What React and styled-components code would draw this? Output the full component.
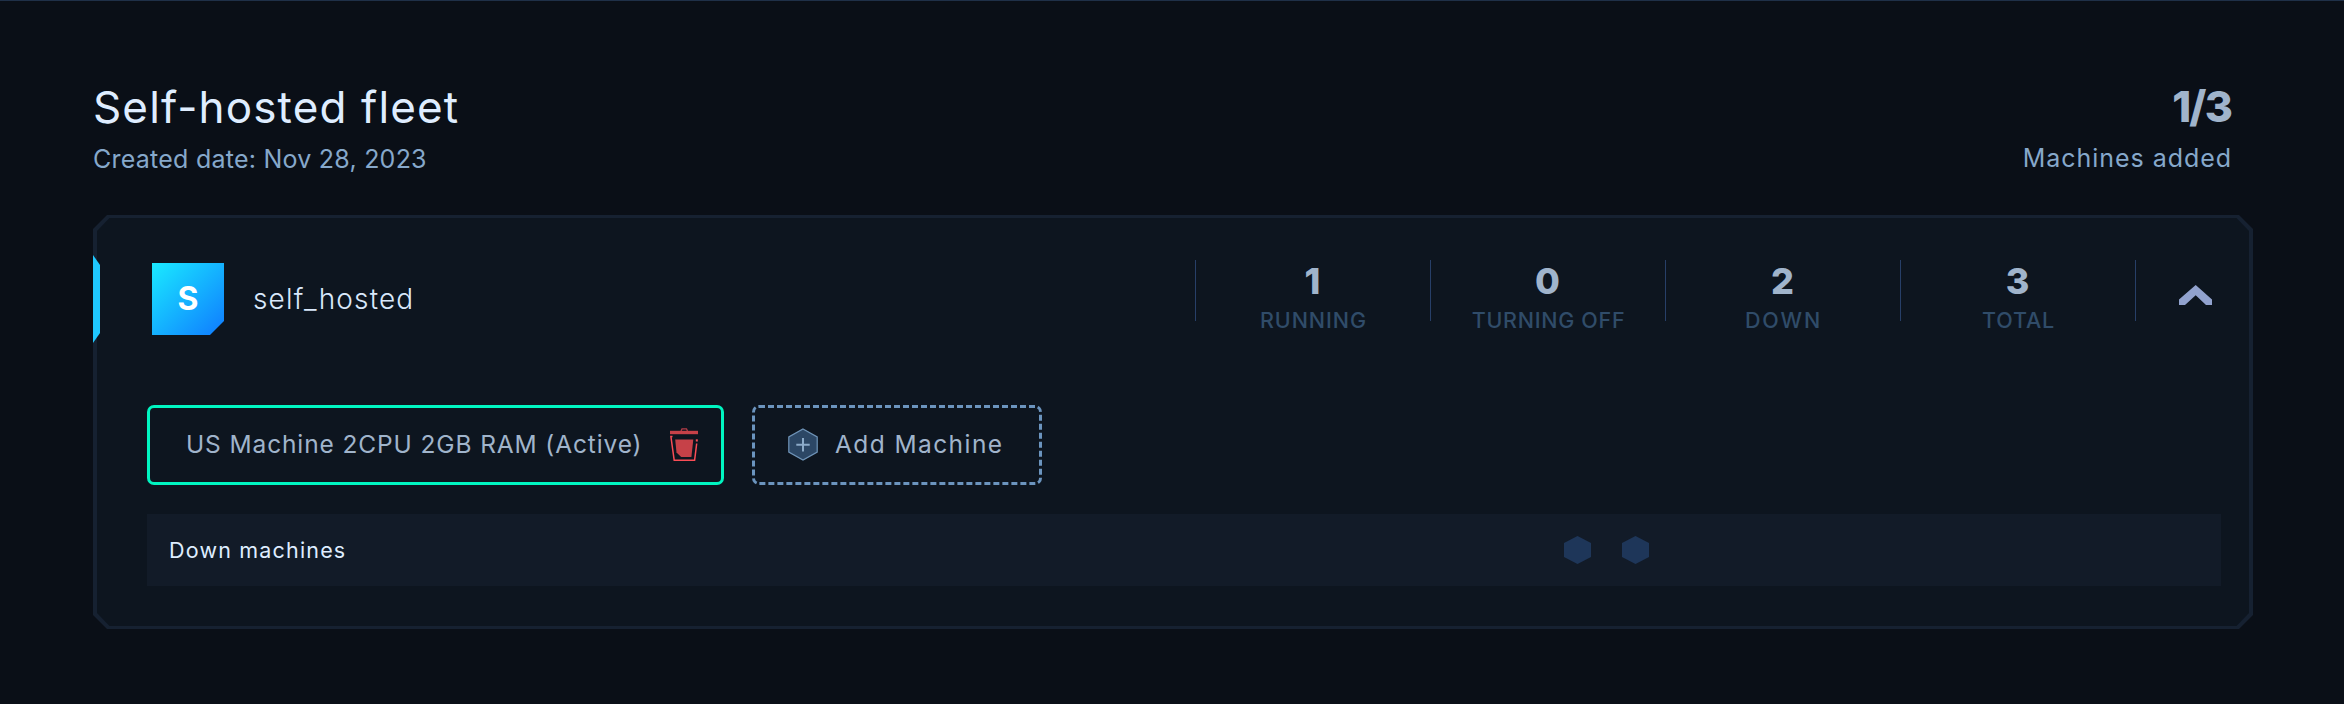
import React from "react";
import styled, { createGlobalStyle } from "styled-components";

const GlobalStyle = createGlobalStyle`
  * { box-sizing: border-box; }
  body {
    margin: 0;
    background: #0a0f17;
    font-family: Inter, "Liberation Sans", sans-serif;
  }
`;

const Page = styled.main`
  height: 704px;
  padding: 84px 91px 0 93px;
  border-top: 1px solid #1f3048;
`;

const FleetHeader = styled.header`
  display: flex;
  justify-content: space-between;
  height: 130px;
  padding-right: 22px;
  white-space: nowrap;
`;

const Title = styled.h1`
  margin: 0;
  font-size: 44px;
  font-weight: 400;
  line-height: 44px;
  letter-spacing: 1.14px;
  color: #dfedff;
`;

const Subtitle = styled.p`
  margin: 15px 0 0;
  font-size: 25px;
  line-height: 30px;
  letter-spacing: 0.24px;
  color: #86a8cb;
`;

const MachineCount = styled.div`
  text-align: right;
`;

const CountValue = styled.div`
  font-size: 43px;
  font-weight: 800;
  line-height: 43px;
  letter-spacing: -1.9px;
  color: #a0b4cb;
`;

const CountLabel = styled(Subtitle)`
  letter-spacing: 0.96px;
  margin-right: -1px;
`;

const Card = styled.section`
  position: relative;
  height: 414px;
  padding: 3px 4px;
  background: #162131;
  clip-path: polygon(
    14px 0, calc(100% - 14px) 0, 100% 14px, 100% calc(100% - 14px),
    calc(100% - 14px) 100%, 14px 100%, 0 calc(100% - 14px), 0 14px
  );
`;

const CardBody = styled.div`
  height: 100%;
  padding: 42px 28px 0 50px;
  background: #0d151f;
  clip-path: polygon(
    12.5px 0, calc(100% - 12.5px) 0, 100% 13px, 100% calc(100% - 13px),
    calc(100% - 12.5px) 100%, 12.5px 100%, 0 calc(100% - 13px), 0 13px
  );
`;

const Accent = styled.span`
  position: absolute;
  left: 0;
  top: 40px;
  width: 7px;
  height: 88px;
  background: #1fc8ff;
  clip-path: polygon(0 0, 100% 10px, 100% calc(100% - 10px), 0 100%);
`;

const GroupHeader = styled.div`
  display: flex;
  align-items: flex-start;
  height: 145px;
`;

const Badge = styled.div`
  width: 72px;
  height: 72px;
  margin: 3px 29px 0 5px;
  background: linear-gradient(135deg, #1aeaff 0%, #0f7bff 100%);
  clip-path: polygon(0 0, 100% 0, 100% 58px, 58px 100%, 0 100%);
  color: #fff;
  font-size: 32px;
  font-weight: 700;
  line-height: 71px;
  text-align: center;
`;

const GroupName = styled.h2`
  flex: 1;
  margin: 4px 0 0;
  font-size: 28px;
  font-weight: 300;
  line-height: 71px;
  letter-spacing: 1.15px;
  color: #d9e8fb;
`;

const Stat = styled.div`
  width: 235px;
  height: 76px;
  padding-top: 3px;
  text-align: center;
  background: linear-gradient(#273f68, #273f68) left top / 1px 61px no-repeat;
`;

const StatValue = styled.div`
  font-size: 36px;
  font-weight: 800;
  line-height: 36px;
  color: #a0b4cb;
`;

const StatLabel = styled.div`
  margin-top: 6px;
  padding-left: 2px;
  font-size: 21.5px;
  font-weight: 500;
  line-height: 30px;
  letter-spacing: ${(p) => p.$tracking}px;
  white-space: nowrap;
  color: #304c69;
`;

const Toggle = styled.button`
  display: flex;
  align-items: flex-start;
  width: 86px;
  height: 61px;
  padding: 25px 0 0 44px;
  border: 0;
  background: linear-gradient(#273f68, #273f68) left top / 1px 61px no-repeat;
`;

const MachineList = styled.div`
  display: flex;
  gap: 28px;
  margin-bottom: 29px;
`;

const MachineButton = styled.div`
  display: flex;
  align-items: center;
  width: ${(p) => p.$width}px;
  height: 80px;
  padding: 0 22px 0 ${(p) => (p.$dashed ? 33 : 36)}px;
  border: 3px ${(p) => (p.$dashed ? "dashed #6b94be" : "solid #00f5c1")};
  border-radius: 7px;
  font-size: 24.5px;
  line-height: 30px;
  letter-spacing: ${(p) => (p.$dashed ? 1.42 : 0.88)}px;
  white-space: nowrap;
  color: #a0b4cb;

  svg { flex: none; }
`;

const MachineName = styled.span`
  flex: 1;
  padding-bottom: 2px;
`;

const PlusIcon = styled.svg`
  margin: 0 17px 1px 0;
`;

const DownRow = styled.div`
  display: flex;
  align-items: center;
  height: 72px;
  padding-left: 22px;
  background: #121b28;
`;

const DownLabel = styled.span`
  width: 1395px;
  font-size: 21.5px;
  letter-spacing: 1.18px;
  color: #dfedff;
`;

const DownSlots = styled.div`
  display: flex;
  gap: 31px;
`;

const Hexagon = styled.span`
  width: 27px;
  height: 28px;
  background: #1e3659;
  clip-path: polygon(50% 0, 100% 25%, 100% 75%, 50% 100%, 0 75%, 0 25%);
`;

const stats = [
  { value: 1, label: "RUNNING", tracking: 0.95 },
  { value: 0, label: "TURNING OFF", tracking: 0.7 },
  { value: 2, label: "DOWN", tracking: 1.9 },
  { value: 3, label: "TOTAL", tracking: 0.8 },
];

const TrashIcon = () => (
  <svg width="29" height="34" viewBox="0 0 29 34" fill="none">
    <path d="M11 3 12 0.9H16.5L17.5 3" stroke="#b23d48" strokeWidth="1.3" />
    <path d="M0 2.8H28V6.2H0Z" fill="#c64148" />
    <path d="M2.5 8.5H0.9L4.2 32.3H24.6L26.7 15.5" stroke="#fa4d56" strokeWidth="1.5" />
    <path d="M26.8 11.3V13.5" stroke="#fa4d56" strokeWidth="2" />
    <path d="M5.2 11.5H23.3L21.4 29H11.2L6.5 24.5Z" fill="#c64148" />
  </svg>
);

export default function App() {
  return (
    <>
      <GlobalStyle />
      <Page>
        <FleetHeader>
          <div>
            <Title>Self-hosted fleet</Title>
            <Subtitle>Created date: Nov 28, 2023</Subtitle>
          </div>
          <MachineCount>
            <CountValue>1/3</CountValue>
            <CountLabel>Machines added</CountLabel>
          </MachineCount>
        </FleetHeader>
        <Card>
          <CardBody>
            <GroupHeader>
              <Badge>S</Badge>
              <GroupName>self_hosted</GroupName>
              {stats.map((s) => (
                <Stat key={s.label}>
                  <StatValue>{s.value}</StatValue>
                  <StatLabel $tracking={s.tracking}>{s.label}</StatLabel>
                </Stat>
              ))}
              <Toggle aria-label="Collapse">
                <svg width="33" height="20" viewBox="0 0 33 20">
                  <path d="M16.7 0 33 14.5V20H27L16.7 10.3 6 20H0V14.5Z" fill="#91a2ce" />
                </svg>
              </Toggle>
            </GroupHeader>
            <MachineList>
              <MachineButton $width={577}>
                <MachineName>US Machine 2CPU 2GB RAM (Active)</MachineName>
                <TrashIcon />
              </MachineButton>
              <MachineButton $width={290} $dashed>
                <PlusIcon width="30" height="33" viewBox="0 0 30 33">
                  <path
                    d="M15 1 29.2 8.9V24.1L15 32 0.8 24.1V8.9Z"
                    fill="#2c4765"
                    stroke="#6f94b8"
                    strokeWidth="1.2"
                  />
                  <path d="M15 10V23.4M8.3 16.7H21.7" stroke="#8cabc9" strokeWidth="2" />
                </PlusIcon>
                <MachineName>Add Machine</MachineName>
              </MachineButton>
            </MachineList>
            <DownRow>
              <DownLabel>Down machines</DownLabel>
              <DownSlots>
                <Hexagon />
                <Hexagon />
              </DownSlots>
            </DownRow>
          </CardBody>
          <Accent />
        </Card>
      </Page>
    </>
  );
}
